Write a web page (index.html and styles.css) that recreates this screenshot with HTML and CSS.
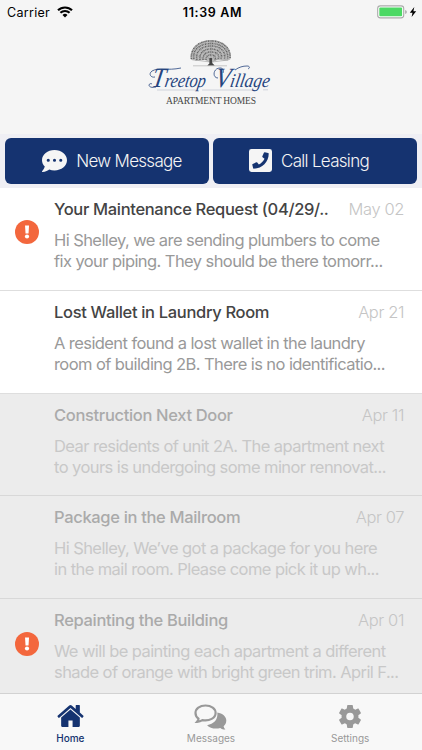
FILE: index.html
```html
<!DOCTYPE html>
<html lang="en">
<head>
    <meta charset="UTF-8">
    <meta name="viewport" content="width=device-width, initial-scale=1.0">
    <title>Treetop Village</title>
    <link rel="stylesheet" href="styles.css">
</head>
<body>
    <div class="app">
        <div class="status-bar">
            <div class="carrier">
                <span>Carrier</span>
                <svg class="wifi" viewBox="0 0 16 12">
                    <path d="M8 11.6 10.5 8.9a3.6 3.6 0 0 0-5 0z"/>
                    <path d="M3.4 6.8a6.6 6.6 0 0 1 9.2 0M1 4.3a10 10 0 0 1 14 0" fill="none" stroke="#000" stroke-width="2.1"/>
                </svg>
            </div>
            <div class="time">11:39 AM</div>
            <svg class="battery" viewBox="0 0 40 14">
                <rect x=".7" y=".9" width="26" height="12" rx="2.6" fill="#fff" stroke="#aaa" stroke-width="1.1"/>
                <rect x="2.3" y="2.5" width="22.8" height="8.8" rx="1" fill="#4cd964"/>
                <path d="M28.3 5v4q1.4-.5 1.4-2t-1.4-2z" fill="#999"/>
                <path d="M37.3 2 32.8 7.7h2.7L34.6 12l4.6-5.8h-2.8z"/>
            </svg>
        </div>

        <header class="header">
            <svg class="logo" viewBox="0 0 140 80">
                <g class="tree">
                    <path class="canopy" d="M49.5 25c-1-11 8-19 20.500-19s21 8 20 18c-1 4-8 2-13 2-5 1-8 2-12 0-5 0-14 2-15.500-1z"/>
                    <g class="leaves">
                        <path d="M50.5 25c-1-11 7-18 19.500-18s20 8 19 17"/>
                        <path d="M53 25c-2-9 6-15.500 17-15.500s18 7 16.500 15"/>
                        <path d="M56 26c-2-8 4-14 14-14s15 6 13.500 13"/>
                        <path d="M59 26c-1-6 3-11 11-11s12 5 10 10"/>
                        <path d="M62 26c0-5 2-8 8-8s9 3 7 7"/>
                        <path d="M65 26c0-3 1-5 5-5s5 2 4 5"/>
                    </g>
                    <path class="branches" d="M70 28V8M70 27 58 13M70 27 81 12M69 28 53 20M71 28 87 19M69 28l-15-2M71 28l16-2"/>
                    <path class="trunk" d="M68.4 24h2.500l.3 5 2.500 2.500h-7.400l2.100-2z"/>
                    <path class="ground" d="M52 31.8h34"/>
                </g>
                <text class="logo-name" transform="translate(10 53) skewX(-10)" textLength="54" lengthAdjust="spacingAndGlyphs"><tspan class="cap">T</tspan>reetop</text>
                <text class="logo-name" transform="translate(73 53) skewX(-10)" textLength="55" lengthAdjust="spacingAndGlyphs"><tspan class="cap">V</tspan>illage</text>
                <path class="swash" d="M14 43c-4 1-7-3-3-6 7-4 15 0 29-3M15 53c-4 1-7 0-7-2 0-1 2-2 3-1M77 44c-6 0-5-10 2-10 3 0 4 2 3 5M94 36c4-3 8-4 12-4 3 0 3 2 1 3"/>
                <path class="rule" d="M16 56h39M61 56h50M122 55.8h5"/>
                <text class="logo-sub" x="25" y="70" textLength="90">APARTMENT HOMES</text>
            </svg>
        </header>

        <div class="actions">
            <button class="action">
                <svg class="icon-comment" viewBox="0 32 512 448"><path fill-rule="evenodd" d="M256 32C114.600 32 0 125.100 0 240c0 49.600 21.400 95 57 130.700C44.500 421.100 2.700 466 2.200 466.500c-2.200 2.300-2.800 5.700-1.500 8.700S4.800 480 8 480c66.300 0 116-31.800 140.600-51.400 32.700 12.300 69 19.400 107.400 19.400 141.400 0 256-93.100 256-208S397.400 32 256 32zM128 272a32 32 0 1 1 0-64 32 32 0 0 1 0 64zm128 0a32 32 0 1 1 0-64 32 32 0 0 1 0 64zm128 0a32 32 0 1 1 0-64 32 32 0 0 1 0 64z"/></svg>
                <span>New Message</span>
            </button>
            <button class="action call">
                <svg class="icon-phone" viewBox="0 32 448 448"><path d="M400 32H48A48 48 0 0 0 0 80v352a48 48 0 0 0 48 48h352a48 48 0 0 0 48-48V80a48 48 0 0 0-48-48zM94 416c-7.033 0-13.057-4.873-14.616-11.627l-14.998-65a15 15 0 0 1 8.707-17.160l69.998-29.999a15 15 0 0 1 17.518 4.289l30.997 37.885c48.944-22.963 88.297-62.858 110.781-110.780l-37.886-30.997a15.001 15.001 0 0 1-4.289-17.518l30-69.998a15 15 0 0 1 17.160-8.707l65 14.998A14.997 14.997 0 0 1 384 126c0 160.292-129.945 290-290 290z"/></svg>
                <span>Call Leasing</span>
            </button>
        </div>

        <main class="messages">
            <article class="message">
                <div class="marker"><svg class="alert" viewBox="0 0 24 24"><circle cx="12" cy="12" r="12"/><path d="M10 5.500h4l-.5 8h-3z"/><circle class="dot" cx="12" cy="16.500" r="2.100"/></svg></div>
                <div class="content">
                    <div class="top"><h2>Your Maintenance Request (04/29/..</h2><time>May 02</time></div>
                    <p>Hi Shelley, we are sending plumbers to come<br>fix your piping. They should be there tomorr...</p>
                </div>
            </article>
            <article class="message">
                <div class="marker"></div>
                <div class="content">
                    <div class="top"><h2>Lost Wallet in Laundry Room</h2><time>Apr 21</time></div>
                    <p>A resident found a lost wallet in the laundry<br>room of building 2B. There is no identificatio...</p>
                </div>
            </article>
            <article class="message read">
                <div class="marker"></div>
                <div class="content">
                    <div class="top"><h2>Construction Next Door</h2><time>Apr 11</time></div>
                    <p>Dear residents of unit 2A. The apartment next<br>to yours is undergoing some minor rennovat...</p>
                </div>
            </article>
            <article class="message read">
                <div class="marker"></div>
                <div class="content">
                    <div class="top"><h2>Package in the Mailroom</h2><time>Apr 07</time></div>
                    <p>Hi Shelley, We’ve got a package for you here<br>in the mail room. Please come pick it up wh...</p>
                </div>
            </article>
            <article class="message read">
                <div class="marker"><svg class="alert" viewBox="0 0 24 24"><circle cx="12" cy="12" r="12"/><path d="M10 5.500h4l-.5 8h-3z"/><circle class="dot" cx="12" cy="16.500" r="2.100"/></svg></div>
                <div class="content">
                    <div class="top"><h2>Repainting the Building</h2><time>Apr 01</time></div>
                    <p>We will be painting each apartment a different<br>shade of orange with bright green trim. April F...</p>
                </div>
            </article>
        </main>

        <nav class="tabs">
            <a class="tab active">
                <svg class="icon-home" viewBox="64 250 1664 1290" preserveAspectRatio="none"><path d="M1472 992v480q0 26-19 45t-45 19h-384v-384H768v384H384q-26 0-45-19t-19-45V992q0-1 .5-3t.5-3l575-474 575 474q1 2 1 6zm223-69-62 74q-8 9-21 11h-3q-13 0-21-7L896 424 204 1001q-12 8-24 7-13-2-21-11l-62-74q-8-10-7-23.500t11-21.500l719-599q32-26 76-26t76 26l244 204V288q0-14 9-23t23-9h192q14 0 23 9t9 23v408l219 182q10 8 11 21.500t-7 23.500z"/></svg>
                <span>Home</span>
            </a>
            <a class="tab">
                <svg class="icon-chat" viewBox="0 0 33 26">
                    <path d="M23.300 8.600c5.200.9 9 4 9 8 0 2.300-1 4.200-2.700 5.700.2 1.200.8 2.200 1.800 3.200-2.100 0-3.800-.5-5.100-1.500-4.900 1.400-10.400.3-13.200-2.800 6.400-1 11.200-5.400 10.200-12.600z"/>
                    <path class="outline" d="M11.500 1.500C5.700 1.500 1.500 4.800 1.500 9c0 2.300 1.100 4.300 3 5.700-.1 1.200-.6 2.200-1.400 3.100 2.200-.1 3.900-.7 5.300-1.700 7.200 1.300 13.200-2.200 13.200-7.100 0-4.200-4.300-7.500-10.100-7.500z"/>
                </svg>
                <span>Messages</span>
            </a>
            <a class="tab settings">
                <svg class="icon-gear" viewBox="2.600 2.400 18.800 19.200" preserveAspectRatio="none"><path fill-rule="evenodd" d="M19.140 12.940c.04-.3.06-.61.06-.94 0-.32-.02-.64-.07-.94l2.030-1.580c.18-.14.23-.41.12-.61l-1.920-3.320c-.12-.22-.37-.29-.59-.22l-2.390.96c-.5-.38-1.030-.7-1.620-.94l-.36-2.540c-.04-.24-.24-.41-.48-.41h-3.840c-.24 0-.43.17-.47.41l-.36 2.540c-.59.24-1.130.57-1.620.94l-2.390-.96c-.22-.08-.47 0-.59.22L2.740 8.870c-.12.21-.08.47.12.61l2.030 1.580c-.05.3-.09.63-.09.94s.02.64.07.94l-2.030 1.580c-.18.14-.23.41-.12.61l1.920 3.320c.12.22.37.29.59.22l2.390-.96c.5.38 1.030.7 1.620.94l.36 2.540c.05.24.24.41.48.41h3.840c.24 0 .44-.17.47-.41l.36-2.540c.59-.24 1.130-.56 1.620-.94l2.390.96c.22.08.47 0 .59-.22l1.920-3.320c.12-.22.07-.47-.12-.61zM12 15.200a3.200 3.200 0 1 1 0-6.400 3.200 3.200 0 0 1 0 6.400z"/></svg>
                <span>Settings</span>
            </a>
        </nav>
    </div>
</body>
</html>
```

FILE: styles.css
```css
* {
    box-sizing: border-box;
}
body {
    margin: 0;
    font-family: Inter, "Liberation Sans", sans-serif;
}
.app {
    display: flex;
    flex-direction: column;
    height: 750px;
    background: #fff;
    overflow: hidden;
}
.status-bar {
    display: grid;
    grid-template-columns: 1fr auto 1fr;
    align-items: center;
    flex: none;
    height: 24px;
    padding: 0 5px 0 7px;
    background: #f5f5f5;
    font-size: 12.5px;
}
.carrier {
    display: flex;
    align-items: center;
    gap: 7px;
    letter-spacing: .3px;
}
.wifi {
    width: 16px;
    height: 12px;
}
.time {
    padding-left: 1px;
    font-weight: 600;
    letter-spacing: .65px;
}
.battery {
    justify-self: end;
    width: 40px;
    height: 14px;
}
.header {
    display: flex;
    justify-content: center;
    flex: none;
    height: 110px;
    padding-top: 10px;
    background: #f5f5f5;
}
.logo {
    width: 140px;
    height: 80px;
}
.canopy {
    fill: #bbb;
}
.leaves {
    fill: none;
    stroke: #666;
    stroke-width: 1.5;
    stroke-dasharray: 1.3 .6 .7 .8;
}
.branches {
    fill: none;
    stroke: #888;
    stroke-width: .5;
}
.trunk {
    fill: #444;
}
.ground {
    stroke: #999;
    stroke-width: .5;
}
.logo-name {
    font-family: "Liberation Serif", serif;
    font-style: italic;
    font-size: 19.5px;
    fill: #27457f;
}
.cap {
    font-size: 28px;
}
.swash {
    fill: none;
    stroke: #27457f;
    stroke-width: .8;
}
.rule {
    stroke: #b5bccb;
    stroke-width: .6;
}
.logo-sub {
    font-family: "Liberation Serif", serif;
    font-size: 9.5px;
    fill: #444;
}
.actions {
    display: grid;
    grid-template-columns: 1fr 1fr;
    gap: 4px;
    flex: none;
    height: 54px;
    padding: 4px 5px 4.5px;
    background: #efeff4;
}
.action {
    display: flex;
    align-items: center;
    justify-content: center;
    gap: 9px;
    padding: 0 0 0 10px;
    border: none;
    border-radius: 6px;
    background: #153370;
    color: #f5f5f5;
    font-family: inherit;
    font-size: 17px;
    font-weight: 300;
    letter-spacing: -.7px;
}
.action.call {
    padding: 0 12px 0 0;
}
.action svg {
    fill: #f5f5f5;
}
.icon-comment {
    width: 25px;
    height: 22px;
}
.icon-phone {
    width: 23px;
    height: 23px;
}
.messages {
    flex: 1;
    min-height: 0;
    overflow: hidden;
}
.message {
    display: flex;
    height: 102.8px;
    border-bottom: 1px solid #dedede;
}
.marker {
    flex: none;
    width: 54px;
    padding: 32.4px 0 0 15px;
}
.alert {
    display: block;
    width: 24px;
    height: 24px;
    fill: #f3673d;
}
.alert path,
.alert .dot {
    fill: #fff;
}
.content {
    flex: 1;
    padding: 10px 18px 0 0;
}
.top {
    display: flex;
    justify-content: space-between;
    height: 22px;
    line-height: 22px;
    white-space: nowrap;
}
h2 {
    margin: 0;
    font-size: 16.5px;
    font-weight: 500;
    letter-spacing: -.33px;
    color: #444;
}
time {
    font-size: 16.5px;
    font-weight: 300;
    letter-spacing: -.4px;
    color: #c5c5c5;
}
p {
    margin: 10px 0 0;
    font-size: 16.5px;
    line-height: 21px;
    letter-spacing: -.58px;
    color: #999;
    white-space: nowrap;
}
.read {
    background: #ececec;
    border-color: #d8d8d8;
}
.read h2 {
    color: #aaa;
}
.read p {
    color: #c8c8c8;
}
.tabs {
    display: grid;
    grid-template-columns: repeat(3, 1fr);
    flex: none;
    height: 57px;
    border-top: 1px solid #d2d2d2;
    background: #f8f8f8;
}
.tab {
    display: flex;
    flex-direction: column;
    align-items: center;
    justify-content: flex-end;
    gap: 4px;
    padding-bottom: 5px;
    color: #999;
    fill: #999;
    font-size: 10px;
    line-height: 13px;
}
.tab.active {
    gap: 5px;
    color: #153370;
    fill: #153370;
    font-weight: 500;
}
.tab.settings {
    padding-right: 3px;
}
.icon-home {
    width: 27px;
    height: 22px;
}
.icon-chat {
    width: 33px;
    height: 26px;
    margin-bottom: -2px;
}
.icon-chat .outline {
    fill: none;
    stroke: #999;
    stroke-width: 2.2;
}
.icon-gear {
    width: 22px;
    height: 23px;
}
```
